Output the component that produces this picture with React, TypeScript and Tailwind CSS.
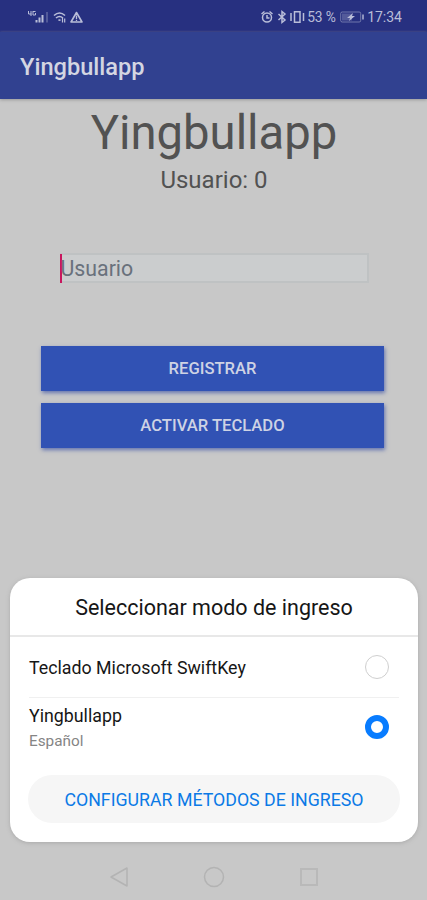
import type { ReactNode } from "react";

function StatusBar() {
  return (
    <div className="flex h-8 items-center bg-[#273080] pt-0.5 text-[#b9bdd8]">
      <svg className="ml-[27px] h-5 w-[60px]" viewBox="0 0 60 20" fill="none" stroke="currentColor">
        <path d="M1.5 4v3h3M4 4v5M6 4.500h2.500M6 4v4h2.500v-2" strokeWidth="1" />
        <path d="M9.500 15.500v-2.500M12.500 15.500v-5M15.500 15.500V8" strokeWidth="2" />
        <path d="M20 15.500V5" strokeWidth="1.500" opacity=".4" />
        <path d="M27 8.500q5.500-5 11 0M29 11q3.500-3 7 0M31.500 13.500q1-1 2 0" strokeWidth="1.600" />
        <path d="M35.500 11v4.500M37.700 15.500v-4" strokeWidth="1.200" />
        <path d="M49.500 5.500 55 15H44Z" strokeWidth="1.600" strokeLinejoin="round" />
        <path d="M49.500 8.500v3.500M49.500 12.800v1.200" strokeWidth="1.300" />
      </svg>
      <div className="ml-auto mr-[25px] flex items-center">
        <svg className="h-5 w-[46px]" viewBox="0 0 46 20" fill="none" stroke="currentColor" strokeWidth="1.500">
          <circle cx="6" cy="10.500" r="4.500" />
          <path d="M.5 7l3-2.500M11.500 7l-3-2.500M6 8v3h2.500" />
          <path d="M17.500 7l6.500 6-3 2.500v-11l3 2.500-6.500 6" />
          <path d="M33.500 4.800h5.500v10.400h-5.500zM30 6v8M42.500 6v8" />
        </svg>
        <span className="w-[33px] text-[13.800px] leading-5 tracking-[-0.1px] whitespace-nowrap">53 %</span>
        <svg className="h-5 w-[27px]" viewBox="0 0 27 20" fill="none" stroke="currentColor">
          <rect x=".7" y="5" width="20" height="10" rx="1.500" opacity=".5" />
          <rect x="2" y="6.500" width="10" height="7" fill="currentColor" stroke="none" opacity=".3" />
          <path d="M13 6 7 11h3l-1 3 6-5h-3z" fill="currentColor" stroke="none" />
          <path d="M23 7.500v5" strokeWidth="2" opacity=".7" />
        </svg>
        <span className="text-[14px] leading-5">17:34</span>
      </div>
    </div>
  );
}

function ActionButton({ children }: { children: ReactNode }) {
  return (
    <button className="h-[45px] w-full bg-[#3152b4] pt-0.5 text-[16.600px] font-medium text-[#ced3e4] shadow-[1px_2px_4px_#6474b0]">
      {children}
    </button>
  );
}

function InputMethodDialog() {
  return (
    <div className="absolute top-[578px] left-[10px] h-[264px] w-[408px] rounded-[20px] bg-white text-[#161616] shadow-[0_1px_4px_#aaa]">
      <h2 className="h-[59px] border-b-2 border-[#e8e8e8] text-center text-[21.500px] leading-[60px]">
        Seleccionar modo de ingreso
      </h2>
      <div className="mx-[19px] flex h-[61px] items-center justify-between border-b border-[#f0f0f0] pr-[10px]">
        <span className="pt-0.5 text-[17.800px]">Teclado Microsoft SwiftKey</span>
        <span className="size-6 rounded-full border border-[#cfcfcf]" />
      </div>
      <div className="mx-[19px] flex h-[58px] items-center justify-between pr-[10px]">
        <div className="pt-[3px]">
          <div className="text-[17.800px] leading-6">Yingbullapp</div>
          <div className="text-[15.300px] leading-[26px] text-[#858585]">Español</div>
        </div>
        <span className="size-6 rounded-full border-[6px] border-[#087cff]" />
      </div>
      <button className="mx-[18px] mt-[19px] h-12 w-[372px] rounded-full bg-[#f6f6f6] pt-0.5 text-[17.750px] whitespace-nowrap text-[#0b7ae6]">
        CONFIGURAR MÉTODOS DE INGRESO
      </button>
    </div>
  );
}

function NavigationBar() {
  return (
    <div className="mt-auto flex h-12 items-center justify-center gap-[71px] pt-0.5 text-[#b3b3b3]">
      <svg className="size-6" viewBox="0 0 24 24" fill="none" stroke="currentColor" strokeWidth="1.500">
        <path d="M20 3v18L4 12Z" strokeLinejoin="round" />
      </svg>
      <svg className="size-6" viewBox="0 0 24 24" fill="none" stroke="currentColor" strokeWidth="1.500">
        <circle cx="12" cy="12" r="9.500" />
      </svg>
      <svg className="size-6" viewBox="0 0 24 24" fill="none" stroke="#b9b9b9" strokeWidth="2">
        <path d="M4 4h16v16H4Z" />
      </svg>
    </div>
  );
}

export default function App() {
  return (
    <div className="relative flex h-[900px] w-[427px] flex-col overflow-hidden bg-[#c8c8c8] font-['Roboto',sans-serif]">
      <StatusBar />
      <header className="flex h-[67px] items-center bg-[#314190] pl-5 pt-1 shadow-[0_1px_3px_#999]">
        <span className="text-[23.600px] font-medium text-[#d4d6e2]">Yingbullapp</span>
      </header>
      <main className="flex flex-col items-center">
        <h1 className="mt-[5px] pl-px text-[47.200px] leading-[58px] text-[#525252]">Yingbullapp</h1>
        <p className="mt-1 pl-px text-[24px] leading-7 text-[#525252]">Usuario: 0</p>
        <div className="mt-[59px] ml-px flex h-[30px] w-[309px] items-center border-2 border-l-0 border-[#bfc2c3] bg-[#cbcdce]">
          <span className="h-[29px] w-0.5 shrink-0 bg-[#c8175e]" />
          <span className="-ml-px pt-0.5 text-[21.300px] leading-7 text-[#69717c]">Usuario</span>
        </div>
        <div className="mt-[63px] mr-0.5 flex w-[343px] flex-col gap-3">
          <ActionButton>REGISTRAR</ActionButton>
          <ActionButton>ACTIVAR TECLADO</ActionButton>
        </div>
      </main>
      <NavigationBar />
      <InputMethodDialog />
    </div>
  );
}
